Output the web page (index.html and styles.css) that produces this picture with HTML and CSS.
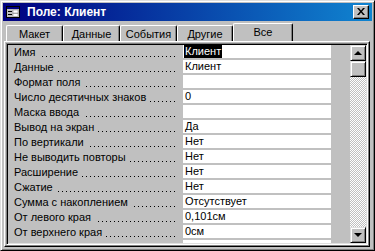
FILE: index.html
```html
<!DOCTYPE html>
<html lang="ru">
<head>
  <meta charset="UTF-8" />
  <title>Поле: Клиент</title>
  <link rel="stylesheet" href="styles.css">
</head>
<body>
  <div class="window">
    <div class="titlebar">
      <svg class="app-icon" width="14" height="12" viewBox="0 0 14 12">
        <rect x="0.5" y="0.5" width="13" height="11" fill="#c0c0c0" stroke="#000"/>
        <rect x="1" y="1" width="12" height="2" fill="#000080"/>
        <rect x="2" y="5" width="4" height="1" fill="#000"/>
        <rect x="7" y="4" width="5" height="3" fill="#fff" stroke="#808080" stroke-width="0.5"/>
        <rect x="2" y="8" width="4" height="1" fill="#000"/>
        <rect x="7" y="7.5" width="5" height="3" fill="#fff" stroke="#808080" stroke-width="0.5"/>
      </svg>
      <span class="title">Поле: Клиент</span>
      <div class="close">
        <svg width="8" height="7" viewBox="0 0 8 7">
          <path d="M0 0h2l2 2.5l2-2.5h2l-3 3.5l3 3.5h-2l-2-2.5l-2 2.5h-2l3-3.5z" fill="#000"/>
        </svg>
      </div>
    </div>

    <div class="tabs">
      <div class="tab">Макет</div>
      <div class="tab">Данные</div>
      <div class="tab">События</div>
      <div class="tab">Другие</div>
      <div class="tab active">Все</div>
    </div>

    <div class="panel">
      <div class="sheet">
        <div class="rows">
          <div class="row"><div class="label"><span>Имя</span></div><div class="value"><span class="selected">Клиент</span></div></div>
          <div class="row"><div class="label"><span>Данные</span></div><div class="value">Клиент</div></div>
          <div class="row"><div class="label"><span>Формат поля</span></div><div class="value"></div></div>
          <div class="row"><div class="label"><span>Число десятичных знаков</span></div><div class="value">0</div></div>
          <div class="row"><div class="label"><span>Маска ввода</span></div><div class="value"></div></div>
          <div class="row"><div class="label"><span>Вывод на экран</span></div><div class="value">Да</div></div>
          <div class="row"><div class="label"><span>По вертикали</span></div><div class="value">Нет</div></div>
          <div class="row"><div class="label"><span>Не выводить повторы</span></div><div class="value">Нет</div></div>
          <div class="row"><div class="label"><span>Расширение</span></div><div class="value">Нет</div></div>
          <div class="row"><div class="label"><span>Сжатие</span></div><div class="value">Нет</div></div>
          <div class="row"><div class="label"><span>Сумма с накоплением</span></div><div class="value">Отсутствует</div></div>
          <div class="row"><div class="label"><span>От левого края</span></div><div class="value">0,101см</div></div>
          <div class="row"><div class="label"><span>От верхнего края</span></div><div class="value">0см</div></div>
          <!-- next row only peeks in under the fold -->
          <div class="row"><div class="label"></div><div class="value"></div></div>
        </div>

        <div class="scrollbar">
          <div class="scroll-btn"><span class="arrow up"></span></div>
          <div class="scroll-thumb"></div>
          <div class="scroll-track"></div>
          <div class="scroll-btn"><span class="arrow down"></span></div>
        </div>
      </div>
    </div>
  </div>
</body>
</html>
```

FILE: styles.css
```css
:root {
  --face: #c0c0c0;
  --light: #ffffff;
  --shadow: #808080;
  --dark: #000000;
}

* {
  box-sizing: border-box;
}

body {
  margin: 0;
  background: var(--face);
  font-family: 'Liberation Sans', Arial, sans-serif;
  font-size: 11px;
  color: #000;
}

/* borders are real 1px borders; the second bevel line is an inset
   shadow drawn inside the padding, so padding starts at 1px more */
.window {
  width: 375px;
  height: 251px;
  display: flex;
  flex-direction: column;
  background: var(--face);
  border: 1px solid;
  border-color: #dfdfdf var(--dark) var(--dark) #dfdfdf;
  box-shadow: inset 1px 1px 0 var(--light), inset -1px -1px 0 var(--shadow);
  padding: 2px;
  overflow: hidden;
}

/* title bar */

.titlebar {
  height: 18px;
  flex-shrink: 0;
  display: flex;
  align-items: center;
  padding: 0 3px 0 3px;
  background: linear-gradient(to right, #000080, #1084d0);
  color: #fff;
}

.app-icon {
  margin-right: 7px;
}

.title {
  font-weight: bold;
  font-size: 12px;
  flex: 1;
}

.close {
  width: 16px;
  height: 14px;
  display: flex;
  align-items: center;
  justify-content: center;
  background: var(--face);
  border: 1px solid;
  border-color: var(--light) var(--dark) var(--dark) var(--light);
  box-shadow: inset -1px -1px 0 var(--shadow);
  padding-bottom: 1px;
}

/* tabs */

.tabs {
  height: 20px;
  flex-shrink: 0;
  display: flex;
  align-items: flex-end;
  padding-left: 3px;
}

.tab {
  width: 57px;
  height: 16px;
  display: flex;
  justify-content: center;
  align-items: center;
  border: 1px solid;
  border-bottom: none;
  border-color: var(--light) var(--dark) transparent var(--light);
  box-shadow: inset -1px 0 0 var(--shadow);
  border-radius: 2px 2px 0 0;
  padding-top: 1px;
}

.tab:nth-child(4) {
  width: 56px;
}

.tab.active {
  width: 60px;
  height: 18px;
  padding-top: 0;
  padding-bottom: 2px;
}

/* panel with property sheet */

.panel {
  flex: 1;
  min-height: 0;
  margin: 0 2px 1px 1px;
  border: 1px solid;
  border-color: var(--light) var(--dark) var(--dark) var(--light);
  box-shadow: inset -1px -1px 0 var(--shadow);
  padding: 1px;
  display: flex;
}

.sheet {
  flex: 1;
  min-height: 0;
  display: flex;
  border: 1px solid;
  border-color: var(--shadow) var(--light) var(--light) var(--shadow);
  box-shadow: inset 1px 1px 0 var(--dark), inset -1px -1px 0 #dfdfdf;
  padding: 1px;
  overflow: hidden;
}

.rows {
  flex: 1;
  overflow: hidden;
}

.row {
  height: 15px;
  display: flex;
}

.label {
  width: 175px;
  height: 15px;
  padding: 1px 8px 0 6px;
  line-height: 13px;
  white-space: nowrap;
  background-image: linear-gradient(to right, #000 1px, transparent 1px);
  background-size: 4px 1px;
  background-repeat: repeat-x;
  background-position: 0 10px;
  background-origin: content-box;
  background-clip: content-box;
}

.label span {
  background: var(--face);
  padding-right: 4px;
}

.value {
  width: 148px;
  height: 13px;
  line-height: 13px;
  background: #fff;
  padding: 0 0 0 2px;
  white-space: nowrap;
}

.selected {
  display: inline-block;
  background: #000;
  color: #fff;
  margin-left: -1px;
  padding: 0 1px;
}

/* scrollbar */

.scrollbar {
  width: 16px;
  display: flex;
  flex-direction: column;
}

.scroll-btn,
.scroll-thumb {
  height: 16px;
  flex-shrink: 0;
  background: var(--face);
  border: 1px solid;
  border-color: #dfdfdf var(--dark) var(--dark) #dfdfdf;
  box-shadow: inset 1px 1px 0 var(--light), inset -1px -1px 0 var(--shadow);
  display: flex;
  align-items: center;
  justify-content: center;
}

.scroll-track {
  flex: 1;
  background-color: var(--face);
  background-image: repeating-conic-gradient(#fff 0 25%, var(--face) 0 50%);
  background-size: 2px 2px;
}

.arrow {
  width: 0;
  height: 0;
  border-left: 4px solid transparent;
  border-right: 4px solid transparent;
}

.arrow.up {
  border-bottom: 4px solid #000;
}

.arrow.down {
  border-top: 4px solid #000;
}
```
